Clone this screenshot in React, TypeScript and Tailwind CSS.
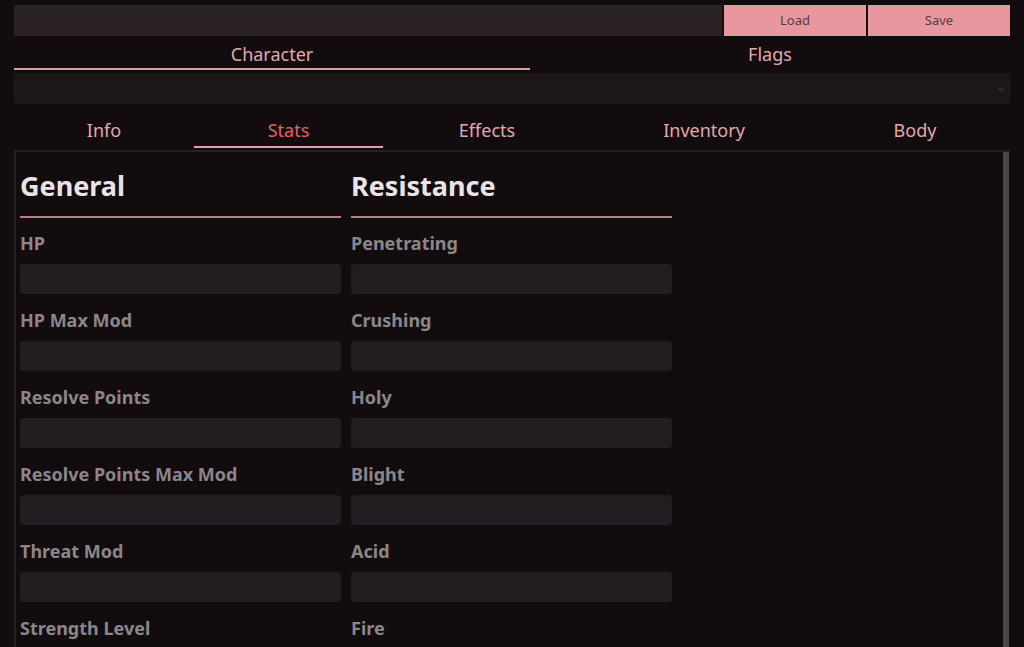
import React from "react";

const general = ["HP", "HP Max Mod", "Resolve Points", "Resolve Points Max Mod", "Threat Mod", "Strength Level"];
const resistance = ["Penetrating", "Crushing", "Holy", "Blight", "Acid", "Fire"];

function Column({ title, items }: { title: string; items: string[] }) {
  return (
    <div className="w-[321px] flex flex-col shrink-0">
      <div className="shrink-0 h-[36px] leading-[36px] text-[27px] font-bold text-[#e9e4e6]">{title}</div>
      <div className="shrink-0 mt-[12px] h-[2px] bg-[#c27a83]" />
      <div className="shrink-0 mt-[13px] flex flex-col">
        {items.map((it) => (
          <div key={it} className="shrink-0 flex flex-col mb-[14px]">
            <div className="shrink-0 h-[25px] leading-[25px] text-[18px] font-bold text-[#8c8689]">{it}</div>
            <div className="shrink-0 mt-[8px] h-[30px] rounded-[4px] bg-[#221d20]" />
          </div>
        ))}
      </div>
    </div>
  );
}

export default function App() {
  const subTabs = [
    { name: "Info", w: "w-[180px]" },
    { name: "Stats", w: "w-[189px]", active: true },
    { name: "Effects", w: "w-[208px]" },
    { name: "Inventory", w: "w-[226px]" },
    { name: "Body", w: "w-[196px]" },
  ];
  return (
    <div
      className="w-[1024px] h-[647px] overflow-hidden bg-[#120c0f] px-[14px] pt-[5px]"
      style={{ fontFamily: '"Noto Sans", "Open Sans", sans-serif' }}
    >
      <div className="flex h-[31px] gap-[2px] w-[996px]">
        <div className="flex-1 bg-[#2a2226] rounded-[2px]" />
        <button className="w-[142px] bg-[#e8979e] text-[#5a3a3f] text-[13px]">Load</button>
        <button className="w-[142px] bg-[#e8979e] text-[#5a3a3f] text-[13px]">Save</button>
      </div>
      <div className="flex h-[34px] w-[996px]">
        <div className="w-[516px] flex flex-col">
          <div className="h-[32px] leading-[36px] text-center text-[18px] text-[#e4a8ac]">Character</div>
          <div className="h-[2px] bg-[#d9a0a6]" />
        </div>
        <div className="flex-1 h-[32px] leading-[36px] text-center text-[18px] text-[#e4a8ac]">Flags</div>
      </div>
      <div className="mt-[3px] h-[31px] w-[996px] rounded-[3px] bg-[#1c1619] flex items-center justify-end pr-[4px]">
        <svg width="10" height="10" viewBox="0 0 10 10">
          <path d="M2 3.5 L5 6.5 L8 3.5" stroke="#3a3235" strokeWidth="1.4" fill="none" />
        </svg>
      </div>
      <div className="flex h-[46px] w-[999px]">
        {subTabs.map((t) => (
          <div key={t.name} className={`${t.w} flex flex-col justify-end`}>
            <div
              className={`h-[28px] leading-[24px] text-center text-[18px] ${
                t.active ? "text-[#e0625f]" : "text-[#e4a8ac]"
              }`}
            >
              {t.name}
            </div>
            <div className={`h-[2px] mb-[2px] ${t.active ? "bg-[#d9a0a6]" : "bg-transparent"}`} />
          </div>
        ))}
      </div>
      <div className="w-[996px] h-[500px] border-t-[2px] border-l-[2px] border-[#262022] flex overflow-hidden">
        <div className="flex-1 flex gap-[10px] pl-[4px] pt-[16px]">
          <Column title="General" items={general} />
          <Column title="Resistance" items={resistance} />
        </div>
        <div className="w-[6px] bg-[#4a4748] mr-[1px]" />
      </div>
    </div>
  );
}
